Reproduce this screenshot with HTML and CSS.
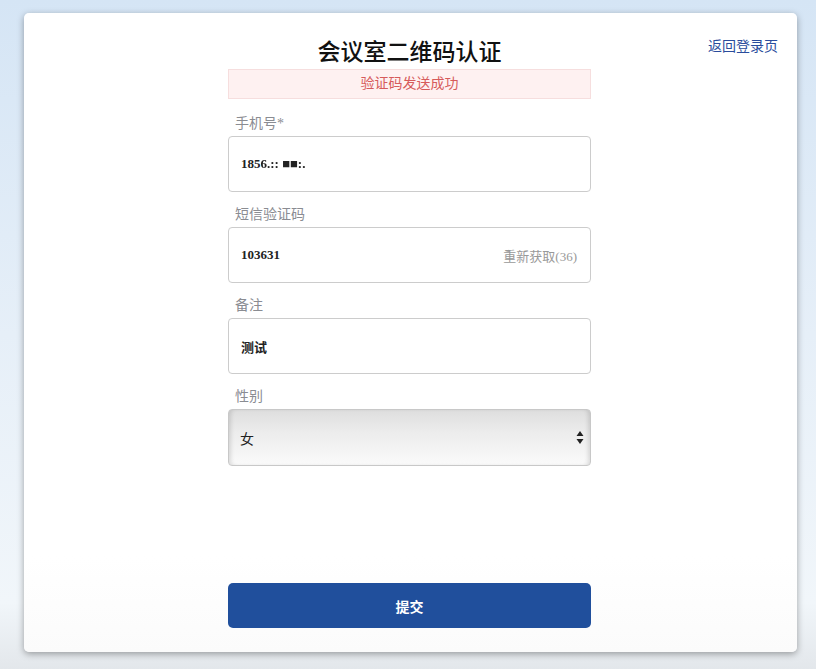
FILE: index.html
```
<!DOCTYPE html>
<html lang="zh-CN">
<head>
	<meta charset="UTF-8">
	<title>会议室二维码认证</title>
	<link rel="stylesheet" href="styles.css">
</head>
<body>
	<div class="card">
		<div class="head">
			<h1 class="title">会议室二维码认证</h1>
			<a class="back" href="#">返回登录页</a>
		</div>
		<form class="form">
			<div class="alert">验证码发送成功</div>
			<div class="field">
				<label class="label">手机号*</label>
				<div class="input">185<span class="mask">6.:: ■■:.</span></div>
			</div>
			<div class="field">
				<label class="label">短信验证码</label>
				<div class="input">
					<span>103631</span>
					<span class="resend">重新获取(36)</span>
				</div>
			</div>
			<div class="field">
				<label class="label">备注</label>
				<div class="input">测试</div>
			</div>
			<div class="field">
				<label class="label">性别</label>
				<div class="select">
					<span>女</span>
					<svg width="8" height="13" viewBox="0 0 8 13"><path d="M4 0 L7.5 5 L0.5 5 Z M0.5 8 L7.5 8 L4 13 Z" fill="#222"/></svg>
				</div>
			</div>
			<button class="submit" type="button">提交</button>
		</form>
	</div>
</body>
</html>
```
FILE: styles.css
```
*{
	margin: 0;
	padding: 0;
	box-sizing: border-box;
}
body{
	width: 816px;
	height: 669px;
	padding: 13px 19px 0 24px;
	font-family: "Liberation Serif", "Noto Sans CJK SC", serif;
	background: linear-gradient(#d5e5f5 0%, #e6eff8 50%, #f1f6fa 90%, #e3e7eb 100%);
	overflow: hidden;
}
.card{
	width: 773px;
	height: 639px;
	padding-top: 24px;
	background: linear-gradient(#fff 85%, #fbfbfb 100%);
	border-radius: 5px;
	box-shadow: 0 2px 7px rgba(0,0,0,0.35);
}
.head{
	display: grid;
	grid-template-columns: 204px 363px 1fr;
}
.title{
	grid-column: 2;
	text-align: center;
	font-size: 23px;
	line-height: 32px;
	font-weight: 500;
	color: #111;
}
.back{
	grid-column: 3;
	justify-self: end;
	align-self: start;
	margin-right: 19px;
	font-size: 14px;
	line-height: 20px;
	color: #2a4c9c;
	text-decoration: none;
}
.form{
	width: 363px;
	margin-left: 204px;
}
.alert{
	height: 30px;
	line-height: 28px;
	text-align: center;
	font-size: 14px;
	color: #d65b5b;
	background-color: #fef1f1;
	border: 1px solid #f6dede;
	margin-bottom: 15px;
}
.field{
	margin-bottom: 13px;
}
.label{
	display: block;
	padding-left: 7px;
	font-size: 14px;
	line-height: 20px;
	color: #8a8c92;
	margin-bottom: 2px;
}
.input{
	height: 56px;
	display: flex;
	align-items: center;
	justify-content: space-between;
	padding: 0 13px 0 12px;
	border: 1px solid #ccc;
	border-radius: 4px;
	font-size: 13px;
	font-weight: bold;
	color: #222;
}
.mask{
	filter: blur(0.6px);
	margin-right: auto;
}
.resend{
	font-weight: normal;
	color: #999;
	font-size: 13px;
}
.select{
	height: 57px;
	display: flex;
	align-items: center;
	justify-content: space-between;
	padding: 0 6px 0 11px;
	border: 1px solid #c8c8c8;
	border-radius: 4px;
	font-size: 14px;
	color: #222;
	background: linear-gradient(#dedede 0%, #ececec 40%, #fafafa 100%);
	box-shadow: inset 4px 0 4px -2px rgba(0,0,0,0.12), inset -4px 0 4px -2px rgba(0,0,0,0.12);
}
.submit{
	display: block;
	width: 363px;
	height: 45px;
	margin-top: 117px;
	border: none;
	border-radius: 5px;
	background-color: #204f9c;
	color: #fff;
	font-family: "Liberation Serif", "Noto Sans CJK SC", serif;
	font-size: 14px;
	font-weight: bold;
}
```
